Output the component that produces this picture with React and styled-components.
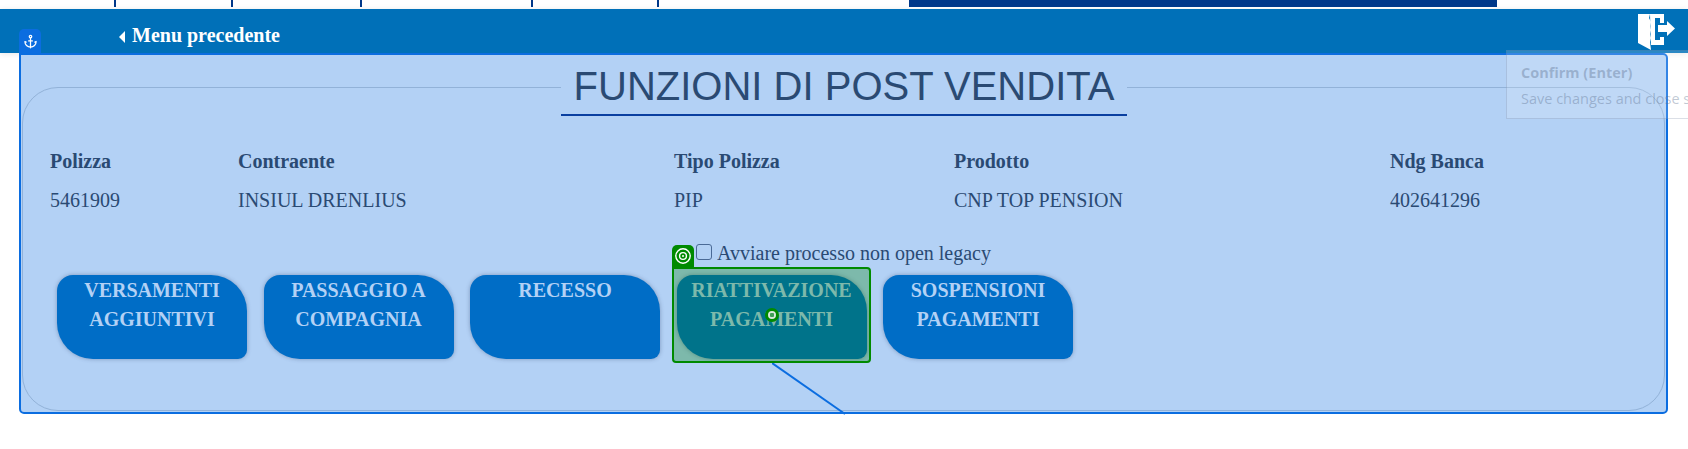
import React from "react";
import styled, { createGlobalStyle } from "styled-components";
import { Anchor } from "lucide-react";

const infoColumns = [
  { label: "Polizza", value: "5461909" },
  { label: "Contraente", value: "INSIUL DRENLIUS" },
  { label: "Tipo Polizza", value: "PIP" },
  { label: "Prodotto", value: "CNP TOP PENSION" },
  { label: "Ndg Banca", value: "402641296" },
];

const actions = [
  { id: "versamenti", lines: ["VERSAMENTI", "AGGIUNTIVI"] },
  { id: "passaggio", lines: ["PASSAGGIO A", "COMPAGNIA"] },
  { id: "recesso", lines: ["RECESSO"] },
  { id: "riattivazione", lines: ["RIATTIVAZIONE", "PAGAMENTI"], highlighted: true },
  { id: "sospensioni", lines: ["SOSPENSIONI", "PAGAMENTI"] },
];

export default function App() {
  return (
    <Page>
      <GlobalStyle />
      <TopNav>
        <NavItem $width={116} />
        <NavItem $width={117} />
        <NavItem $width={129} />
        <NavItem $width={171} />
        <NavItem $width={126} />
        <ActiveTab />
      </TopNav>
      <Bar>
        <BackLink>
          <BackArrow />
          Menu precedente
        </BackLink>
        <ExitIcon />
      </Bar>
      <Panel>
        <AnchorBadge>
          <Anchor size={15} strokeWidth={2} />
        </AnchorBadge>
        <Frame>
          <Title>FUNZIONI DI POST VENDITA</Title>
          <InfoGrid>
            {infoColumns.map((col) => (
              <InfoHead key={col.label}>{col.label}</InfoHead>
            ))}
            {infoColumns.map((col) => (
              <InfoValue key={col.label}>{col.value}</InfoValue>
            ))}
          </InfoGrid>
          <CheckRow>
            <input type="checkbox" />
            <span>Avviare processo non open legacy</span>
          </CheckRow>
          <Actions>
            {actions.map((action) => (
              <ActionSlot key={action.id}>
                <ActionButton>
                  {action.lines.map((line) => (
                    <span key={line}>{line}</span>
                  ))}
                </ActionButton>
                {action.highlighted && (
                  <Highlight>
                    <TargetBadge>
                      <svg width="18" height="18" viewBox="0 0 18 18" fill="none" stroke="#fff">
                        <circle cx="9" cy="9" r="7.2" strokeWidth="1.4" />
                        <circle cx="9" cy="9" r="3.4" strokeWidth="1.4" />
                        <circle cx="9" cy="9" r="1" fill="#fff" stroke="none" />
                      </svg>
                    </TargetBadge>
                    <Marker />
                    <Connector width="74" height="52" viewBox="0 0 74 52">
                      <line x1="0" y1="0" x2="73" y2="51" stroke="#0b6de0" strokeWidth="2" />
                    </Connector>
                  </Highlight>
                )}
              </ActionSlot>
            ))}
          </Actions>
        </Frame>
      </Panel>
      <Hint>
        <strong>Confirm (Enter)</strong>
        <span>Save changes and close s</span>
      </Hint>
    </Page>
  );
}

function ExitIcon() {
  return (
    <ExitSvg width="38" height="38" viewBox="0 0 38 38">
      <g fill="#fff">
        <path d="M1 1 H13 L12 5 L14 9 L13 13 L14 17 L13 21 L14 25 L13 29 L14 37 L1 30 Z" />
        <path d="M13 1 H27 V10 H23 V5 H18 V27 H23 V24 H27 V32 H14 Z" />
        <path d="M21 12 H30 V8 L38 15.5 L30 23 V19 H21 Z" />
      </g>
    </ExitSvg>
  );
}

const GlobalStyle = createGlobalStyle`
  html, body {
    margin: 0;
    padding: 0;
    background: #fff;
  }
  body {
    font-family: "Liberation Serif", "Times New Roman", serif;
    overflow: hidden;
  }
`;

const Page = styled.div`
  position: relative;
  width: 1688px;
  height: 449px;
  overflow: hidden;
`;

const TopNav = styled.nav`
  display: flex;
  height: 9px;
  align-items: flex-start;
`;

const NavItem = styled.div`
  width: ${(p) => p.$width}px;
  height: 7px;
  border-right: 2px solid #00388a;
  box-sizing: border-box;
`;

const ActiveTab = styled.div`
  width: 588px;
  height: 7px;
  margin-left: 250px;
  background: #00388a;
`;

const Bar = styled.header`
  display: flex;
  align-items: center;
  justify-content: space-between;
  height: 44px;
  padding: 0 13px 0 119px;
  box-sizing: border-box;
  background: #0070b8;
  box-shadow: 0 1px 6px rgba(0, 0, 0, 0.1);
`;

const BackLink = styled.a`
  display: flex;
  align-items: center;
  gap: 7px;
  margin-top: 9px;
  color: #fff;
  font-size: 20px;
  font-weight: bold;
`;

const BackArrow = styled.i`
  width: 0;
  height: 0;
  margin-top: 2px;
  border-style: solid;
  border-width: 6px 6px 6px 0;
  border-color: transparent #fff transparent transparent;
`;

const ExitSvg = styled.svg`
  display: block;
  margin-top: 1px;
`;

const Panel = styled.section`
  position: relative;
  width: 1649px;
  height: 361px;
  margin-left: 19px;
  padding: 3px 1px 1px;
  box-sizing: border-box;
  background: #b3d1f5;
  border: 2px solid #0b6de0;
  border-radius: 0 5px 5px 5px;
`;

const AnchorBadge = styled.div`
  position: absolute;
  top: -26px;
  left: -2px;
  width: 22px;
  height: 25px;
  display: flex;
  align-items: center;
  justify-content: center;
  color: #fff;
  background: #0b6de0;
  border-radius: 5px 5px 0 0;
`;

const Frame = styled.fieldset`
  height: 100%;
  margin: 0;
  padding: 0 26px 0 27px;
  box-sizing: border-box;
  border: 1px solid #92b2d8;
  border-radius: 36px;
`;

const Title = styled.legend`
  margin: 0 auto;
  padding: 0 13px;
  color: #2a4a73;
  font-family: "Liberation Sans", Arial, sans-serif;
  font-size: 40px;
  font-weight: normal;
  line-height: 56px;
  border-bottom: 2px solid #0a3fa0;
`;

const InfoGrid = styled.div`
  display: grid;
  grid-template-columns: 188px 436px 280px 436px 200px;
  grid-auto-rows: 39px;
  align-items: center;
  margin-top: 26px;
  color: #2a4a73;
  font-size: 20px;
`;

const InfoHead = styled.div`
  font-weight: bold;
`;

const InfoValue = styled.div``;

const CheckRow = styled.label`
  display: flex;
  align-items: center;
  gap: 5px;
  margin: 21px 0 0 646px;
  color: #2a4a73;
  font-size: 20px;
  line-height: 24px;

  input {
    appearance: none;
    width: 16px;
    height: 16px;
    margin: 0 0 3px;
    background: transparent;
    border: 1px solid #4a6a96;
    border-radius: 3px;
  }
`;

const Actions = styled.div`
  display: flex;
  gap: 16.5px;
  margin: 10px 0 0 7px;
`;

const ActionSlot = styled.div`
  position: relative;
`;

const ActionButton = styled.button`
  display: flex;
  flex-direction: column;
  align-items: center;
  width: 190px;
  height: 84px;
  padding: 1px 0 0;
  color: #b3d1f5;
  background: #006dc6;
  border: 0;
  border-radius: 16px 36px 9px 36px;
  box-shadow: 0 0 4px rgba(60, 80, 120, 0.45);
  font-family: inherit;
  font-size: 20px;
  font-weight: bold;
  line-height: 28.5px;
`;

const Highlight = styled.div`
  position: absolute;
  top: -8px;
  left: -5px;
  right: -4px;
  bottom: -4px;
  background: rgba(0, 128, 0, 0.3);
  border: 2px solid #008a00;
  border-radius: 0 4px 4px 4px;
`;

const TargetBadge = styled.div`
  position: absolute;
  top: -24px;
  left: -2px;
  width: 22px;
  height: 22px;
  display: flex;
  align-items: center;
  justify-content: center;
  background: #008a00;
  border-radius: 5px 5px 0 0;
`;

const Marker = styled.i`
  position: absolute;
  top: 39px;
  left: 91px;
  width: 14px;
  height: 14px;
  box-sizing: border-box;
  background: radial-gradient(circle, #3f9f55 0 2px, #d8e8dc 2.5px);
  border: 3px solid #008a00;
  border-radius: 50%;
`;

const Connector = styled.svg`
  position: absolute;
  top: 100%;
  left: 98px;
  margin-top: 2px;
`;

const Hint = styled.aside`
  position: absolute;
  top: 50px;
  left: 1506px;
  width: 220px;
  height: 69px;
  display: flex;
  flex-direction: column;
  gap: 7px;
  padding: 12px 14px;
  box-sizing: border-box;
  white-space: nowrap;
  font-family: "Open Sans", sans-serif;
  font-size: 14.5px;
  color: rgba(90, 110, 140, 0.38);
  background: rgba(255, 255, 255, 0.17);
  border: 1px solid rgba(90, 110, 140, 0.22);
`;
